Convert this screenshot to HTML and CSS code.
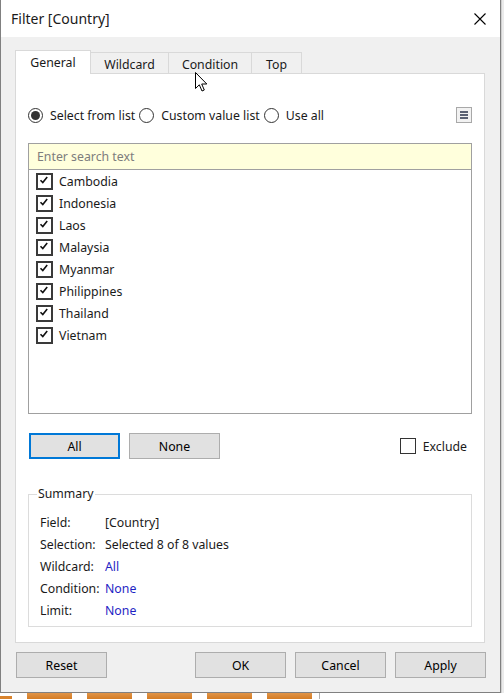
FILE: index.html
```html
<!DOCTYPE html>
<html>
<head>
<meta charset="utf-8">
<link rel="stylesheet" href="styles.css">
</head>
<body>
<div class="screen">
  <div class="top">
    <div class="dialog">
      <div class="titlebar">
        <span class="title">Filter [Country]</span>
        <svg class="close" width="12" height="12" viewBox="0 0 12 12"><path d="M0.5 0.5 L11.5 11.5 M11.5 0.5 L0.5 11.5" stroke="#000" stroke-width="1.1" fill="none"/></svg>
      </div>
      <div class="body">
        <div class="tabs">
          <div class="tab tab-general active">General</div>
          <div class="tab tab-wildcard">Wildcard</div>
          <div class="tab tab-condition">Condition</div>
          <div class="tab tab-top">Top</div>
        </div>
        <div class="panel">
          <div class="radio-row">
            <span class="radio checked"></span><span class="radio-label">Select from list</span>
            <span class="radio"></span><span class="radio-label">Custom value list</span>
            <span class="radio"></span><span class="radio-label">Use all</span>
            <span class="menu-btn"><i></i><i></i><i></i></span>
          </div>
          <div class="listbox">
            <div class="search">Enter search text</div>
            <div class="items">
              <div class="item"><span class="cb"><svg viewBox="0 0 10 10"><path d="M1.5 5.2 L3.8 7.6 L8.2 2" stroke="#111" stroke-width="1.6" fill="none"/></svg></span>Cambodia</div>
              <div class="item"><span class="cb"><svg viewBox="0 0 10 10"><path d="M1.5 5.2 L3.8 7.6 L8.2 2" stroke="#111" stroke-width="1.6" fill="none"/></svg></span>Indonesia</div>
              <div class="item"><span class="cb"><svg viewBox="0 0 10 10"><path d="M1.5 5.2 L3.8 7.6 L8.2 2" stroke="#111" stroke-width="1.6" fill="none"/></svg></span>Laos</div>
              <div class="item"><span class="cb"><svg viewBox="0 0 10 10"><path d="M1.5 5.2 L3.8 7.6 L8.2 2" stroke="#111" stroke-width="1.6" fill="none"/></svg></span>Malaysia</div>
              <div class="item"><span class="cb"><svg viewBox="0 0 10 10"><path d="M1.5 5.2 L3.8 7.6 L8.2 2" stroke="#111" stroke-width="1.6" fill="none"/></svg></span>Myanmar</div>
              <div class="item"><span class="cb"><svg viewBox="0 0 10 10"><path d="M1.5 5.2 L3.8 7.6 L8.2 2" stroke="#111" stroke-width="1.6" fill="none"/></svg></span>Philippines</div>
              <div class="item"><span class="cb"><svg viewBox="0 0 10 10"><path d="M1.5 5.2 L3.8 7.6 L8.2 2" stroke="#111" stroke-width="1.6" fill="none"/></svg></span>Thailand</div>
              <div class="item"><span class="cb"><svg viewBox="0 0 10 10"><path d="M1.5 5.2 L3.8 7.6 L8.2 2" stroke="#111" stroke-width="1.6" fill="none"/></svg></span>Vietnam</div>
            </div>
          </div>
          <div class="btn-row">
            <button class="btn btn-focus">All</button>
            <button class="btn">None</button>
            <span class="exclude"><span class="cb cb-thin"></span>Exclude</span>
          </div>
          <fieldset class="summary">
            <legend>Summary</legend>
            <div class="sum-grid">
              <span>Field:</span><span>[Country]</span>
              <span>Selection:</span><span>Selected 8 of 8 values</span>
              <span>Wildcard:</span><span class="link">All</span>
              <span>Condition:</span><span class="link">None</span>
              <span>Limit:</span><span class="link">None</span>
            </div>
          </fieldset>
        </div>
        <div class="footer">
          <button class="btn">Reset</button>
          <span class="spacer"></span>
          <button class="btn">OK</button>
          <button class="btn">Cancel</button>
          <button class="btn">Apply</button>
        </div>
      </div>
    </div>
    <div class="side"></div>
  </div>
  <div class="strip">
    <span class="bar-stub"></span>
    <span class="bar"></span>
    <span class="bar"></span>
    <span class="bar"></span>
    <span class="bar"></span>
    <span class="bar"></span>
    <span class="vline"></span>
  </div>
  <svg class="cursor" width="13" height="20" viewBox="0 0 13 20"><path d="M0.5 0.5 L0.5 16.5 L4.3 12.8 L7 19 L9.3 18 L6.7 12 L11.8 12 Z" fill="#fff" stroke="#000" stroke-width="1" stroke-linejoin="miter"/></svg>
</div>
</body>
</html>
```

FILE: styles.css
```css
* { box-sizing: border-box; }
html, body { margin: 0; padding: 0; }
body {
  font-family: "Noto Sans", "Open Sans", sans-serif;
  font-size: 12.3px;
  color: #1a1a1a;
  background: #fff;
}
.screen {
  position: relative;
  width: 504px;
  height: 699px;
  overflow: hidden;
}
.top { display: flex; height: 693px; }
.dialog {
  width: 501px;
  height: 693px;
  border: 1px solid #808080;
  border-top: none;
  display: flex;
  flex-direction: column;
  background: #f0f0f0;
}
.side {
  flex: 1;
  background: #ebebeb;
  border-left: 1px solid #d0d0d0;
}
.titlebar {
  height: 37px;
  background: #fff;
  display: flex;
  align-items: center;
  justify-content: space-between;
  padding: 0 14px 0 10px;
}
.title { font-size: 14px; color: #1a1a1a; }
.close { display: block; }
.body {
  flex: 1;
  padding: 13px 15px 0 14px;
  display: flex;
  flex-direction: column;
}
.tabs {
  height: 23px;
  display: flex;
  align-items: flex-end;
}
.tab {
  height: 21px;
  border: 1px solid #d9d9d9;
  border-bottom: none;
  background: #f0f0f0;
  text-align: center;
  line-height: 21px;
  padding-top: 1px;
  margin-left: -1px;
  color: #1a1a1a;
}
.tab.active {
  position: relative;
  z-index: 1;
  height: 24px;
  margin-bottom: -1px;
  margin-left: 0;
  background: #fff;
  line-height: 23px;
  padding-top: 0;
}
.tab-general { width: 76px; }
.tab-wildcard { width: 79px; }
.tab-condition { width: 84px; }
.tab-top { width: 51px; }
.panel {
  height: 570px;
  background: #fff;
  border: 1px solid #d9d9d9;
  padding: 0 12px;
  display: flex;
  flex-direction: column;
}
.radio-row {
  margin-top: 33px;
  height: 16px;
  display: flex;
  align-items: center;
}
.radio {
  width: 15px;
  height: 15px;
  border: 1px solid #333;
  border-radius: 50%;
  margin-right: 7px;
  display: flex;
  align-items: center;
  justify-content: center;
  flex: none;
}
.radio.checked::after {
  content: "";
  width: 9px;
  height: 9px;
  border-radius: 50%;
  background: #333;
}
.radio-label { margin-right: 4px; white-space: nowrap; }
.menu-btn {
  margin-left: auto;
  width: 16px;
  height: 16px;
  border: 1px solid #a8a8a8;
  background: #f2f2f2;
  display: flex;
  flex-direction: column;
  align-items: center;
  justify-content: center;
  gap: 1px;
}
.menu-btn i {
  display: block;
  width: 8px;
  height: 2px;
  background: #5c6274;
}
.listbox {
  margin-top: 20px;
  height: 271px;
  border: 1px solid #a0a0a0;
  display: flex;
  flex-direction: column;
}
.search {
  height: 26px;
  background: #ffffdc;
  border-bottom: 1px solid #a0a0a0;
  padding-left: 8px;
  line-height: 25px;
  color: #7d7d7d;
}
.items { padding-left: 7px; }
.item {
  height: 22px;
  display: flex;
  align-items: center;
  white-space: nowrap;
}
.cb {
  width: 17px;
  height: 17px;
  border: 2px solid #3a3a3a;
  margin-right: 6px;
  display: flex;
  align-items: center;
  justify-content: center;
  flex: none;
  background: #fff;
}
.cb svg { width: 10px; height: 10px; display: block; margin: -3px 0 0 -2px; }
.cb-thin { width: 16px; height: 16px; border: 1px solid #333; margin-right: 7px; }
.btn-row {
  margin-top: 19px;
  height: 26px;
  display: flex;
  align-items: center;
  padding-left: 1px;
}
.btn {
  font: inherit;
  color: #000;
  width: 91px;
  height: 26px;
  background: #e1e1e1;
  border: 1px solid #adadad;
  padding: 0;
  margin: 0;
  text-align: center;
}
.btn + .btn { margin-left: 9px; }
.btn-focus { border: 2px solid #0078d7; }
.exclude {
  margin-left: auto;
  margin-right: 5px;
  display: flex;
  align-items: center;
}
.summary {
  margin: 27px 0 0 0;
  padding: 0 0 5px 11px;
  border: 1px solid #dcdcdc;
}
.summary legend {
  margin-left: -3px;
  padding: 0 1px;
  line-height: 16px;
}
.sum-grid {
  padding-top: 9px;
  display: grid;
  grid-template-columns: 65px auto;
  grid-auto-rows: 22px;
  align-items: center;
}
.link { color: #1f1fc4; }
.footer {
  margin: 9px -1px 0 1px;
  display: flex;
  height: 26px;
}
.footer .spacer { flex: 1; }
.footer .spacer + .btn { margin-left: 0; }
.strip {
  height: 6px;
  display: flex;
  align-items: stretch;
  background: #fff;
}
.bar-stub {
  width: 12px;
  height: 3px;
  align-self: flex-end;
  background: #d8822c;
}
.bar {
  width: 45px;
  margin-left: 15px;
  background: linear-gradient(#e09448, #d47c24);
}
.vline {
  width: 1px;
  margin-left: 7px;
  background: #b0b0b0;
}
.cursor {
  position: absolute;
  left: 195px;
  top: 72px;
}
```
